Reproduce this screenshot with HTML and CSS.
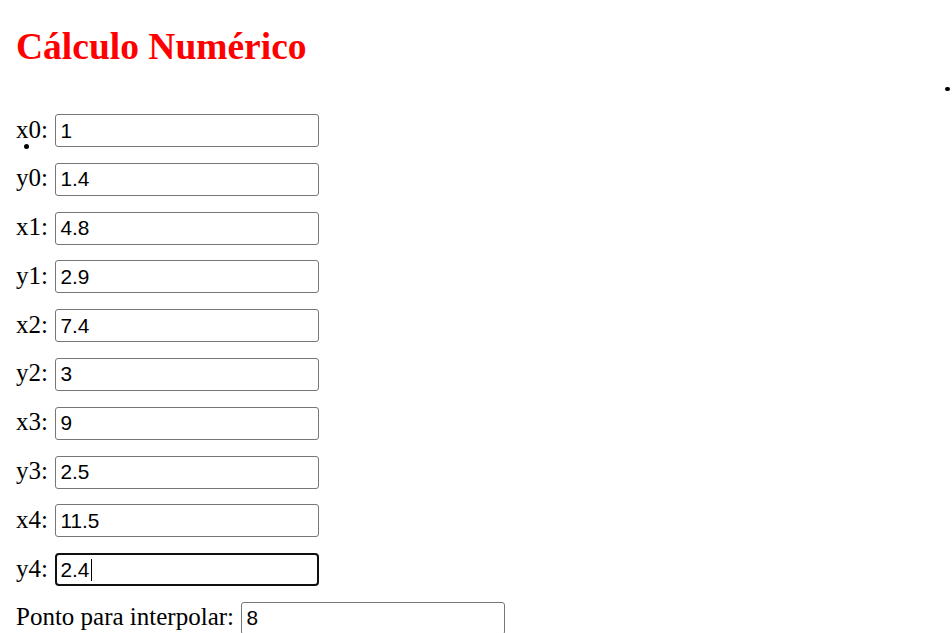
FILE: index.html
```html
<!DOCTYPE html>
<html lang="pt">
<head>
<meta charset="utf-8">
<title>Cálculo Numérico</title>
<link rel="stylesheet" href="styles.css">
</head>
<body>
<div class="page">
  <h1 class="title">Cálculo Numérico</h1>
  <form class="fields">
    <div class="row"><label class="lbl">x0:</label><input class="field" type="text" value="1"></div>
    <div class="row"><label class="lbl">y0:</label><input class="field" type="text" value="1.4"></div>
    <div class="row"><label class="lbl">x1:</label><input class="field" type="text" value="4.8"></div>
    <div class="row"><label class="lbl">y1:</label><input class="field" type="text" value="2.9"></div>
    <div class="row"><label class="lbl">x2:</label><input class="field" type="text" value="7.4"></div>
    <div class="row"><label class="lbl">y2:</label><input class="field" type="text" value="3"></div>
    <div class="row"><label class="lbl">x3:</label><input class="field" type="text" value="9"></div>
    <div class="row"><label class="lbl">y3:</label><input class="field" type="text" value="2.5"></div>
    <div class="row"><label class="lbl">x4:</label><input class="field" type="text" value="11.5"></div>
    <div class="row"><label class="lbl">y4:</label><span class="wrap"><input class="field focused" type="text" value="2.4"><span class="caret"></span></span></div>
    <div class="row"><label class="lbl">Ponto para interpolar:</label><input class="field" type="text" value="8"></div>
  </form>
  <span class="dot dot-a"></span>
  <span class="dot dot-b"></span>
</div>
</body>
</html>
```

FILE: styles.css
```css
html, body {
  margin: 0;
  padding: 0;
  background: #ffffff;
  overflow: hidden;
}

.page {
  position: relative;
  width: 952px;
  height: 633px;
  padding-left: 16px;
  box-sizing: border-box;
  font-family: "Liberation Serif", "Times New Roman", serif;
  color: #000000;
}

.title {
  margin: 0;
  padding-top: 27px;
  font-size: 37.5px;
  line-height: 40px;
  font-weight: bold;
  color: #ff0000;
}

.fields {
  display: flex;
  flex-direction: column;
  gap: 15.8px;
  margin: 47px 0 0 0;
}

.row {
  display: flex;
  align-items: baseline;
  height: 33px;
}

.lbl {
  font-size: 25px;
  line-height: normal;
  white-space: pre;
  margin-right: 6.75px;
}

.wrap {
  position: relative;
  display: inline-flex;
}

.field {
  box-sizing: border-box;
  width: 264.5px;
  height: 33px;
  margin: 0;
  padding: 0 4px 0 4.7px;
  border: 1.5px solid #767676;
  border-radius: 3px;
  background: #ffffff;
  font-family: "Liberation Sans", Arial, sans-serif;
  font-size: 20.8px;
  color: #000000;
  outline: none;
}

.field.focused {
  border: 2.5px solid #101010;
  border-radius: 4px;
  padding-left: 3.7px;
}

.caret {
  position: absolute;
  left: 36px;
  top: 6px;
  width: 1px;
  height: 22px;
  background: #000000;
}

.dot {
  position: absolute;
  width: 5px;
  height: 5px;
  border-radius: 50%;
  background: #000000;
}

.dot-a {
  left: 23.5px;
  top: 143.5px;
}

.dot-b {
  left: 945px;
  top: 86.5px;
  width: 4.5px;
  height: 4.5px;
}
```
